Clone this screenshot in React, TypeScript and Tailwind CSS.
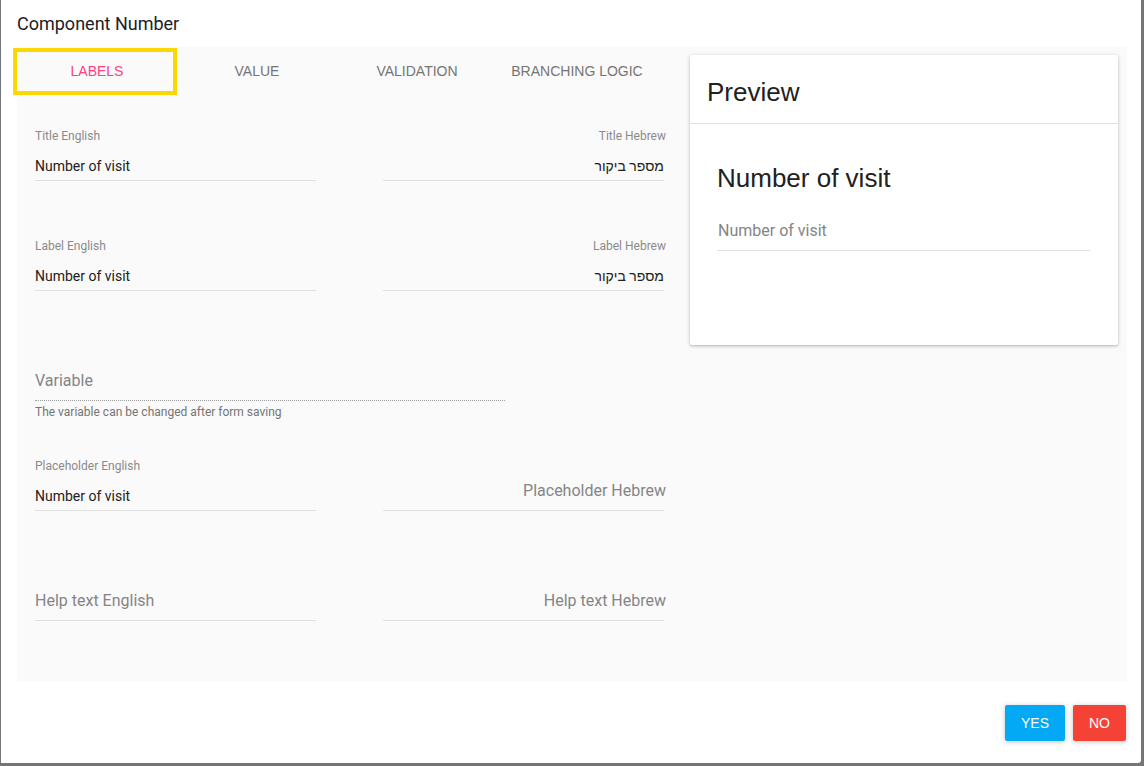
import React from "react";

const font = { fontFamily: 'Roboto, "Liberation Sans", "DejaVu Sans", sans-serif' };
const arial = { fontFamily: '"Liberation Sans", Arial, sans-serif' };

function ValueField({ label, value, rtl }: { label: string; value: string; rtl?: boolean }) {
  return (
    <div className="w-[281px]">
      <div className={`h-[14px] text-[12px] leading-[14px] text-[#8a8a8a] ${rtl ? "text-right -mr-[2px]" : ""}`}>{label}</div>
      <div
        dir={rtl ? "rtl" : "ltr"}
        className={`mt-[13px] h-[20px] text-[14px] leading-[20px] text-[#212121] ${rtl ? "text-right" : ""}`}
      >
        {value}
      </div>
      <div className="mt-[4px] h-px bg-[#e0e0e0]" />
    </div>
  );
}

function HintField({ hint, rtl }: { hint: string; rtl?: boolean }) {
  return (
    <div className="w-[281px]">
      <div className={`h-[20px] text-[16px] leading-[20px] text-[#858585] ${rtl ? "text-right -mr-[2px]" : ""}`}>{hint}</div>
      <div className="mt-[9px] h-px bg-[#e0e0e0]" />
    </div>
  );
}

export default function App() {
  const tabs = ["LABELS", "VALUE", "VALIDATION", "BRANCHING LOGIC"];
  return (
    <div className="w-[1144px] h-[766px] bg-[#757575] overflow-hidden" style={font}>
      <div className="ml-[1px] w-[1140px] h-[763px] bg-white rounded-br-[3px] flex flex-col">
        <div className="px-[16px] pt-[13px] h-[35px] text-[18px] leading-[22px] text-[#212121]">Component Number</div>
        <div className="ml-[16px] mr-[14px] mt-[12px] h-[634px] bg-[#fafafa] flex">
          {/* left column */}
          <div className="w-[664px] flex flex-col">
            <div className="flex h-[48px]">
              {tabs.map((t, i) => (
                <div
                  key={t}
                  style={arial}
                  className={`relative w-[160px] h-[48px] flex items-center justify-center text-[14px] ${i === 0 ? "text-[#ff4081]" : "text-[#757575]"}`}
                >
                  {t}
                  {i === 0 && (
                    <div className="absolute left-[-4px] top-[1px] w-[164px] h-[47px] border-[4px] border-[#ffd700]" />
                  )}
                </div>
              ))}
            </div>
            <div className="pl-[18px] pt-[34px] flex flex-col">
              <div className="flex gap-[67px]">
                <ValueField label="Title English" value="Number of visit" />
                <ValueField label="Title Hebrew" value="מספר ביקור" rtl />
              </div>
              <div className="mt-[58px] flex gap-[67px]">
                <ValueField label="Label English" value="Number of visit" />
                <ValueField label="Label Hebrew" value="מספר ביקור" rtl />
              </div>
              <div className="mt-[80px] w-[470px]">
                <div className="h-[20px] text-[16px] leading-[20px] text-[#858585]">Variable</div>
                <div className="mt-[9px] border-b border-dotted border-[#9e9e9e]" />
                <div className="mt-[4px] text-[12px] leading-[14px] text-[#757575]">The variable can be changed after form saving</div>
              </div>
              <div className="mt-[40px] flex gap-[67px] items-end">
                <ValueField label="Placeholder English" value="Number of visit" />
                <HintField hint="Placeholder Hebrew" rtl />
              </div>
              <div className="mt-[80px] flex gap-[67px] items-end">
                <HintField hint="Help text English" />
                <HintField hint="Help text Hebrew" rtl />
              </div>
            </div>
          </div>
          {/* preview card */}
          <div className="ml-[9px] mt-[8px] w-[428px] h-[290px] bg-white rounded-[2px] shadow-[0_1px_4px_rgba(0,0,0,0.2),0_1px_2px_rgba(0,0,0,0.12)] flex flex-col">
            <div style={arial} className="h-[69px] pl-[17px] pt-[6px] flex items-center text-[26px] text-[#212121] border-b border-[#e0e0e0]">Preview</div>
            <div className="pl-[27px] pr-[28px]">
              <div style={arial} className="mt-[38px] h-[32px] text-[26px] leading-[32px] text-[#212121]">Number of visit</div>
              <div className="mt-[27px] pl-[1px] h-[20px] text-[16px] leading-[20px] text-[#858585]">Number of visit</div>
              <div className="mt-[9px] h-px bg-[#e0e0e0]" />
            </div>
          </div>
        </div>
        <div className="mt-[24px] mr-[15px] flex justify-end gap-[8px]" style={arial}>
          <div className="w-[60px] h-[36px] rounded-[2px] bg-[#03a9f4] text-white text-[14px] flex items-center justify-center shadow-[0_1px_6px_rgba(0,0,0,0.12),0_1px_4px_rgba(0,0,0,0.12)]">YES</div>
          <div className="w-[53px] h-[36px] rounded-[2px] bg-[#f44336] text-white text-[14px] flex items-center justify-center shadow-[0_1px_6px_rgba(0,0,0,0.12),0_1px_4px_rgba(0,0,0,0.12)]">NO</div>
        </div>
      </div>
    </div>
  );
}
